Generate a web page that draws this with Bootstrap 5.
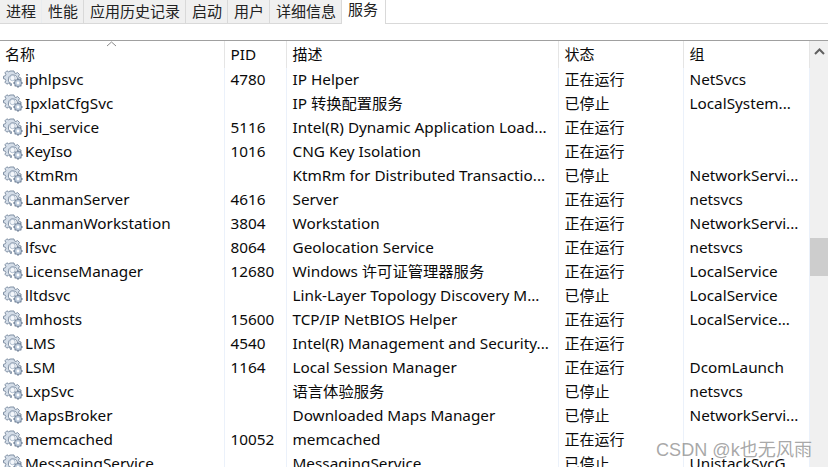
<!DOCTYPE html>
<html lang="zh-CN">
<head>
<meta charset="utf-8">
<title>服务</title>
<link href="https://cdn.jsdelivr.net/npm/bootstrap@5.3.0/dist/css/bootstrap.min.css" rel="stylesheet">
<style>
html,body{height:467px;overflow:hidden;background:#fff}
body{font-family:"Noto Sans","Noto Sans CJK SC",sans-serif;font-size:15.3px;color:#0a0a0a;line-height:24px;position:relative}
.tabstrip{height:24px;border-bottom:1px solid #d9d9d9;margin:0;flex-wrap:nowrap}
.tabstrip .nav-link{height:23px;padding:0 5px 0 6px;margin:0;border:0;border-right:1px solid #d9d9d9;border-radius:0;background:#f0f0f0;color:#222;font-size:15px;line-height:22px;font-family:"Noto Sans CJK SC",sans-serif}
.tabstrip .nav-link.active{height:24px;background:#fff;color:#222;padding:0 7px 0 6px;line-height:18px;border-right:1px solid #d9d9d9}
.gapband{height:16px}
.listarea{border-top:1px solid #a0a0a0;height:427px;overflow:hidden}
.svc{table-layout:fixed;width:809px;margin:0;--bs-table-bg:transparent;color:#0a0a0a;flex:none}
.svc th,.svc td{padding:0;height:24px;border:0;border-right:1px solid #ebf1fa;white-space:nowrap;overflow:hidden;font-weight:400;box-shadow:none;color:#0a0a0a;line-height:22px}
.svc th{height:27px;padding-bottom:1px;border-right:1px solid #e5e5e5;vertical-align:middle}
.svc .cn{font-family:"Noto Sans CJK SC",sans-serif;font-size:15px}
.c1{width:224px}.c2{width:62px}.c3{width:272px}.c4{width:125px}.c5{width:126px}
.svc th.c1x{padding-left:5px;position:relative}
.svc td.nm{padding-left:3px}
.svc td.pd,.svc th.pd{padding-left:6px}
.svc td.ds,.svc th.ds{padding-left:6px}
.svc td.st,.svc th.st{padding-left:6px}
.svc td.gp,.svc th.gp{padding-left:6px}
.nmflex{gap:2px}
.gearic{width:20px;height:18px;flex:none}
.caretup{position:absolute;left:106px;top:0;width:11px;height:6px}
.sbar{width:19px;background:#f0f0f0;flex:none;position:relative}
.sbar-up{height:20px}
.sbar-thumb{height:38px;background:#cdcdcd;margin-top:177px}
.wmark{position:absolute;left:656px;top:438px;font-family:"Liberation Sans","Noto Sans CJK SC",sans-serif;font-size:18.100px;line-height:24px;color:rgba(130,130,130,.7);white-space:nowrap}
</style>
</head>
<body>
<svg width="0" height="0" class="position-absolute">
  <defs>
    <symbol id="gear" viewBox="0 0 20 18">
      <g fill="#d5dee9" stroke="#7f8fa3" stroke-width="1">
        <path d="M8 1h3l.4 1.800 1.500.7 1.600-1 2 2-1 1.600.7 1.500 1.800.4v1.600h-3.600A4.500 4.500 0 1 0 8.400 13.600V15.500H7.500l-.5-1.600-1.500-.7-1.600 1-2-2 1-1.600-.7-1.500L.5 8.700V6.300l1.700-.4.700-1.500-1-1.600 2-2 1.600 1 1.500-.7z"/>
        <circle cx="15" cy="13" r="3.600" fill="#b9c8da"/>
      </g>
      <circle cx="15" cy="13" r="1.400" fill="#fff"/>
      <circle cx="9.500" cy="8" r="2.700" fill="#f4f7fb" stroke="#9fb0c4" stroke-width=".8"/>
      <g stroke="#6f8199" stroke-width="1.300">
        <path d="M15 8.300v1.200M15 16.500v1.200M10.300 13h1.200M18.500 13h1.200M11.700 9.700l.8.8M17.500 15.500l.8.8M18.300 9.700l-.8.8M12.500 15.500l-.8.8"/>
      </g>
    </symbol>
  </defs>
</svg>

<ul class="nav nav-tabs tabstrip">
  <li class="nav-item"><a class="nav-link" href="#">进程</a></li>
  <li class="nav-item"><a class="nav-link" href="#">性能</a></li>
  <li class="nav-item"><a class="nav-link" href="#">应用历史记录</a></li>
  <li class="nav-item"><a class="nav-link" href="#">启动</a></li>
  <li class="nav-item"><a class="nav-link" href="#">用户</a></li>
  <li class="nav-item"><a class="nav-link" href="#">详细信息</a></li>
  <li class="nav-item"><a class="nav-link active" href="#">服务</a></li>
</ul>
<div class="gapband"></div>
<div class="listarea d-flex">
  <table class="table svc">
    <colgroup><col class="c1"><col class="c2"><col class="c3"><col class="c4"><col class="c5"></colgroup>
    <thead>
      <tr>
        <th class="c1x cn">名称<svg class="caretup" viewBox="0 0 11 6"><path d="M1 5l4.500-4L10 5" fill="none" stroke="#8a8a8a" stroke-width="1"/></svg></th>
        <th class="pd">PID</th><th class="ds cn">描述</th><th class="st cn">状态</th><th class="gp cn">组</th>
      </tr>
    </thead>
    <tbody>
      <tr><td class="nm"><div class="d-flex align-items-center nmflex"><svg class="gearic"><use href="#gear"/></svg>iphlpsvc</div></td><td class="pd">4780</td><td class="ds">IP Helper</td><td class="st cn">正在运行</td><td class="gp">NetSvcs</td></tr>
      <tr><td class="nm"><div class="d-flex align-items-center nmflex"><svg class="gearic"><use href="#gear"/></svg>IpxlatCfgSvc</div></td><td class="pd"></td><td class="ds">IP 转换配置服务</td><td class="st cn">已停止</td><td class="gp">LocalSystem...</td></tr>
      <tr><td class="nm"><div class="d-flex align-items-center nmflex"><svg class="gearic"><use href="#gear"/></svg>jhi_service</div></td><td class="pd">5116</td><td class="ds">Intel(R) Dynamic Application Load...</td><td class="st cn">正在运行</td><td class="gp"></td></tr>
      <tr><td class="nm"><div class="d-flex align-items-center nmflex"><svg class="gearic"><use href="#gear"/></svg>KeyIso</div></td><td class="pd">1016</td><td class="ds">CNG Key Isolation</td><td class="st cn">正在运行</td><td class="gp"></td></tr>
      <tr><td class="nm"><div class="d-flex align-items-center nmflex"><svg class="gearic"><use href="#gear"/></svg>KtmRm</div></td><td class="pd"></td><td class="ds">KtmRm for Distributed Transactio...</td><td class="st cn">已停止</td><td class="gp">NetworkServi...</td></tr>
      <tr><td class="nm"><div class="d-flex align-items-center nmflex"><svg class="gearic"><use href="#gear"/></svg>LanmanServer</div></td><td class="pd">4616</td><td class="ds">Server</td><td class="st cn">正在运行</td><td class="gp">netsvcs</td></tr>
      <tr><td class="nm"><div class="d-flex align-items-center nmflex"><svg class="gearic"><use href="#gear"/></svg>LanmanWorkstation</div></td><td class="pd">3804</td><td class="ds">Workstation</td><td class="st cn">正在运行</td><td class="gp">NetworkServi...</td></tr>
      <tr><td class="nm"><div class="d-flex align-items-center nmflex"><svg class="gearic"><use href="#gear"/></svg>lfsvc</div></td><td class="pd">8064</td><td class="ds">Geolocation Service</td><td class="st cn">正在运行</td><td class="gp">netsvcs</td></tr>
      <tr><td class="nm"><div class="d-flex align-items-center nmflex"><svg class="gearic"><use href="#gear"/></svg>LicenseManager</div></td><td class="pd">12680</td><td class="ds">Windows 许可证管理器服务</td><td class="st cn">正在运行</td><td class="gp">LocalService</td></tr>
      <tr><td class="nm"><div class="d-flex align-items-center nmflex"><svg class="gearic"><use href="#gear"/></svg>lltdsvc</div></td><td class="pd"></td><td class="ds">Link-Layer Topology Discovery M...</td><td class="st cn">已停止</td><td class="gp">LocalService</td></tr>
      <tr><td class="nm"><div class="d-flex align-items-center nmflex"><svg class="gearic"><use href="#gear"/></svg>lmhosts</div></td><td class="pd">15600</td><td class="ds">TCP/IP NetBIOS Helper</td><td class="st cn">正在运行</td><td class="gp">LocalService...</td></tr>
      <tr><td class="nm"><div class="d-flex align-items-center nmflex"><svg class="gearic"><use href="#gear"/></svg>LMS</div></td><td class="pd">4540</td><td class="ds">Intel(R) Management and Security...</td><td class="st cn">正在运行</td><td class="gp"></td></tr>
      <tr><td class="nm"><div class="d-flex align-items-center nmflex"><svg class="gearic"><use href="#gear"/></svg>LSM</div></td><td class="pd">1164</td><td class="ds">Local Session Manager</td><td class="st cn">正在运行</td><td class="gp">DcomLaunch</td></tr>
      <tr><td class="nm"><div class="d-flex align-items-center nmflex"><svg class="gearic"><use href="#gear"/></svg>LxpSvc</div></td><td class="pd"></td><td class="ds">语言体验服务</td><td class="st cn">已停止</td><td class="gp">netsvcs</td></tr>
      <tr><td class="nm"><div class="d-flex align-items-center nmflex"><svg class="gearic"><use href="#gear"/></svg>MapsBroker</div></td><td class="pd"></td><td class="ds">Downloaded Maps Manager</td><td class="st cn">已停止</td><td class="gp">NetworkServi...</td></tr>
      <tr><td class="nm"><div class="d-flex align-items-center nmflex"><svg class="gearic"><use href="#gear"/></svg>memcached</div></td><td class="pd">10052</td><td class="ds">memcached</td><td class="st cn">正在运行</td><td class="gp"></td></tr>
      <tr><td class="nm"><div class="d-flex align-items-center nmflex"><svg class="gearic"><use href="#gear"/></svg>MessagingService</div></td><td class="pd"></td><td class="ds">MessagingService</td><td class="st cn">已停止</td><td class="gp">UnistackSvcG</td></tr>
    </tbody>
  </table>
  <div class="sbar">
    <div class="sbar-up d-flex align-items-center justify-content-center"><svg width="11" height="7" viewBox="0 0 11 7"><path d="M1 6l4.500-4.500L10 6" fill="none" stroke="#606060" stroke-width="2"/></svg></div>
    <div class="sbar-thumb"></div>
  </div>
</div>
<div class="wmark">CSDN @k也无风雨</div>
<script src="https://cdn.jsdelivr.net/npm/bootstrap@5.3.0/dist/js/bootstrap.bundle.min.js"></script>
</body>
</html>
